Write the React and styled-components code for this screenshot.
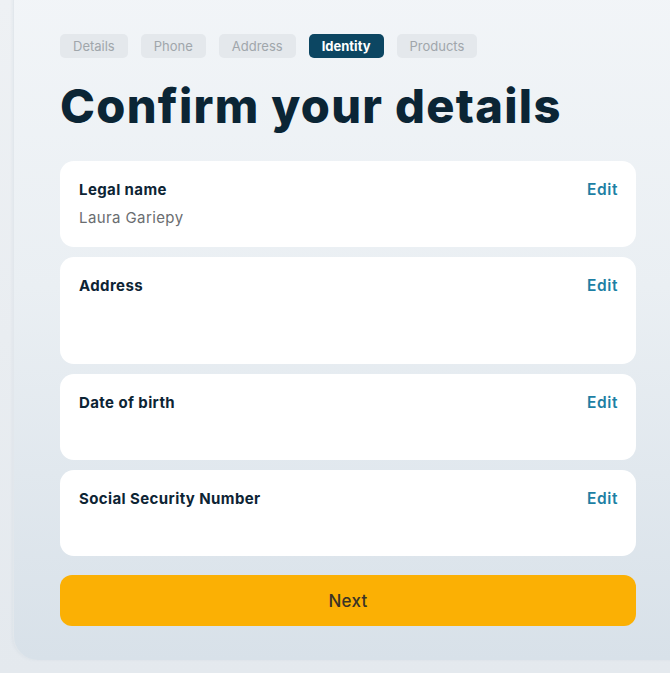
import React from 'react';
import styled, { createGlobalStyle } from 'styled-components';

const GlobalStyle = createGlobalStyle`
  html, body {
    margin: 0;
    padding: 0;
    background: #e9eef2;
    overflow: hidden;
  }
  body {
    font-family: Inter, "Noto Sans", sans-serif;
    width: 670px;
    height: 673px;
  }
`;

const steps = ['Details', 'Phone', 'Address', 'Identity', 'Products'];

const fields = [
  { label: 'Legal name', value: 'Laura Gariepy', lines: 1 },
  { label: 'Address', value: '', lines: 2 },
  { label: 'Date of birth', value: '', lines: 1 },
  { label: 'Social Security Number', value: '', lines: 1 },
];

const App = () => {
  return (
    <>
      <GlobalStyle />
      <Page>
        <Panel>
          <Steps>
            {steps.map((s) => (
              <Step key={s} active={s === 'Identity'}>
                {s}
              </Step>
            ))}
          </Steps>
          <Title>Confirm your details</Title>
          <Cards>
            {fields.map((f) => (
              <Card key={f.label}>
                <CardHead>
                  <Label>{f.label}</Label>
                  <EditLink>Edit</EditLink>
                </CardHead>
                <Value lines={f.lines}>{f.value}</Value>
              </Card>
            ))}
          </Cards>
          <NextButton>Next</NextButton>
        </Panel>
      </Page>
    </>
  );
};

export default App;

const Page = styled.div`
  display: flex;
  width: 670px;
  height: 673px;
  background: linear-gradient(to bottom, #eef1f4 0%, #e4e9ee 100%);
  overflow: hidden;
`;

const Panel = styled.div`
  margin: -20px 0 0 14px;
  width: 668px;
  flex-shrink: 0;
  height: 680px;
  box-sizing: border-box;
  padding: 54px 46px 0 46px;
  border-radius: 0 0 0 24px;
  background: linear-gradient(to bottom, #f2f5f8 0%, #eaeff3 45%, #d8e1e9 100%);
  box-shadow: -1px 0 0 #e2e7ec, -2px 0 3px rgba(120, 140, 160, 0.08);
  display: flex;
  flex-direction: column;
`;

const Steps = styled.div`
  display: flex;
  gap: 13px;
`;

const Step = styled.div`
  height: 24px;
  padding: 0 13px;
  display: flex;
  align-items: center;
  border-radius: 5px;
  font-size: 13px;
  font-weight: ${(p) => (p.active ? 700 : 400)};
  color: ${(p) => (p.active ? '#ffffff' : '#a0a6ab')};
  background: ${(p) => (p.active ? '#0c4662' : '#e4e8ec')};
`;

const Title = styled.h1`
  margin: 20px 0 0 0;
  font-size: 47px;
  line-height: 56px;
  font-weight: 800;
  letter-spacing: 1.3px;
  color: #0b2535;
`;

const Cards = styled.div`
  margin-top: 27px;
  display: flex;
  flex-direction: column;
  gap: 10px;
`;

const Card = styled.div`
  background: #ffffff;
  border-radius: 14px;
  padding: 19px 18px 19px 19px;
  display: flex;
  flex-direction: column;
  gap: 8px;
`;

const CardHead = styled.div`
  display: flex;
  justify-content: space-between;
  align-items: center;
`;

const Label = styled.div`
  font-size: 15px;
  line-height: 20px;
  font-weight: 700;
  letter-spacing: 0.4px;
  color: #0d2434;
`;

const EditLink = styled.div`
  font-size: 15.5px;
  line-height: 20px;
  font-weight: 600;
  letter-spacing: 0.6px;
  color: #1d7fa4;
`;

const Value = styled.div`
  font-size: 15px;
  line-height: 20px;
  letter-spacing: 0.4px;
  min-height: ${(p) => p.lines * 20 + (p.lines - 1) * 1}px;
  color: #6a6d70;
`;

const NextButton = styled.div`
  margin-top: 19px;
  height: 51px;
  border-radius: 12px;
  background: #fbb004;
  display: flex;
  align-items: center;
  justify-content: center;
  font-size: 17px;
  font-weight: 500;
  letter-spacing: 0.3px;
  color: #3a3426;
`;
